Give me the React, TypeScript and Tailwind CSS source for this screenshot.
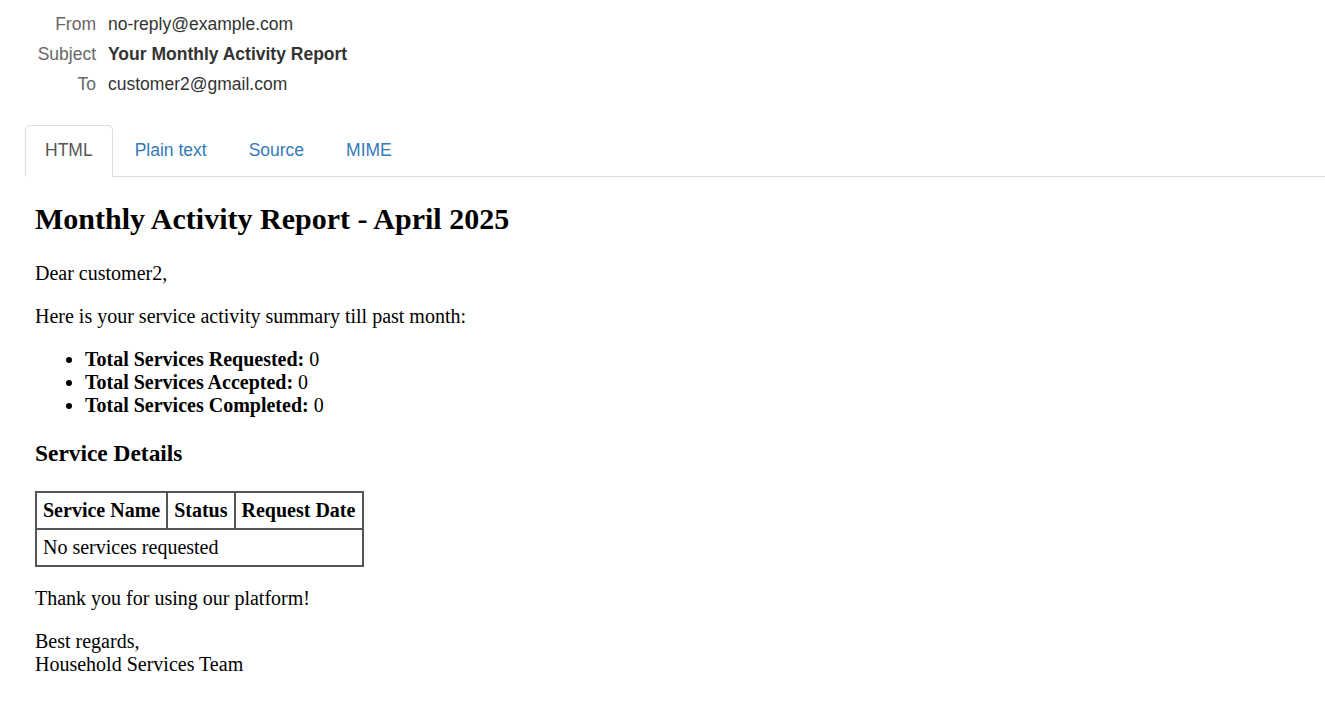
import React from "react";

export default function App() {
  const sans = { fontFamily: '"Liberation Sans", Arial, sans-serif' };
  const serif = { fontFamily: '"Liberation Serif", "Times New Roman", serif' };
  return (
    <div className="w-[1325px] h-[709px] bg-white overflow-hidden">
      <div style={sans} className="text-[17.5px] pt-[9px]">
        <div className="grid grid-cols-[96px_1fr] gap-x-[12px] leading-[30px]">
          <div className="text-right text-[#666]">From</div>
          <div className="text-[#333]">no-reply@example.com</div>
          <div className="text-right text-[#666]">Subject</div>
          <div className="text-[#333] font-bold">Your Monthly Activity Report</div>
          <div className="text-right text-[#666]">To</div>
          <div className="text-[#333]">customer2@gmail.com</div>
        </div>
        <ul className="flex ml-[25px] mt-[26px] border-b border-[#ddd]">
          <li className="mr-[2px] -mb-px">
            <span className="block px-[19px] h-[52px] leading-[48px] border border-[#ddd] border-b-white rounded-t-[5px] bg-white text-[#555]">
              HTML
            </span>
          </li>
          <li className="mr-[2px] -mb-px">
            <span className="block px-[19px] h-[52px] leading-[48px] border border-transparent text-[#337ab7]">
              Plain text
            </span>
          </li>
          <li className="mr-[2px] -mb-px">
            <span className="block px-[19px] h-[52px] leading-[48px] border border-transparent text-[#337ab7]">
              Source
            </span>
          </li>
          <li className="mr-[2px] -mb-px">
            <span className="block px-[19px] h-[52px] leading-[48px] border border-transparent text-[#337ab7]">
              MIME
            </span>
          </li>
        </ul>
      </div>
      <div style={serif} className="pl-[35px] text-black text-[20px] leading-[23px]">
        <h1 className="text-[30px] leading-[34px] font-bold mt-[25px]">
          Monthly Activity Report - April 2025
        </h1>
        <p className="mt-[26px]">Dear customer2,</p>
        <p className="mt-[20px]">Here is your service activity summary till past month:</p>
        <ul className="mt-[20px] pl-[50px] list-disc">
          <li>
            <b>Total Services Requested:</b> 0
          </li>
          <li>
            <b>Total Services Accepted:</b> 0
          </li>
          <li>
            <b>Total Services Completed:</b> 0
          </li>
        </ul>
        <h3 className="text-[23.4px] leading-[27px] font-bold mt-[23px]">Service Details</h3>
        <table className="mt-[24px] border-collapse">
          <thead>
            <tr>
              <th className="border-2 border-[#555] pl-[6px] pr-[6px] py-[6px] font-bold text-left">Service Name</th>
              <th className="border-2 border-[#555] pl-[6px] pr-[6px] py-[6px] font-bold text-left">Status</th>
              <th className="border-2 border-[#555] pl-[6px] pr-[7px] py-[6px] font-bold text-left">Request Date</th>
            </tr>
          </thead>
          <tbody>
            <tr>
              <td colSpan={3} className="border-2 border-[#555] pl-[6px] pr-[6px] py-[6px]">
                No services requested
              </td>
            </tr>
          </tbody>
        </table>
        <p className="mt-[20px]">Thank you for using our platform!</p>
        <p className="mt-[20px]">
          Best regards,
          <br />
          Household Services Team
        </p>
      </div>
    </div>
  );
}
